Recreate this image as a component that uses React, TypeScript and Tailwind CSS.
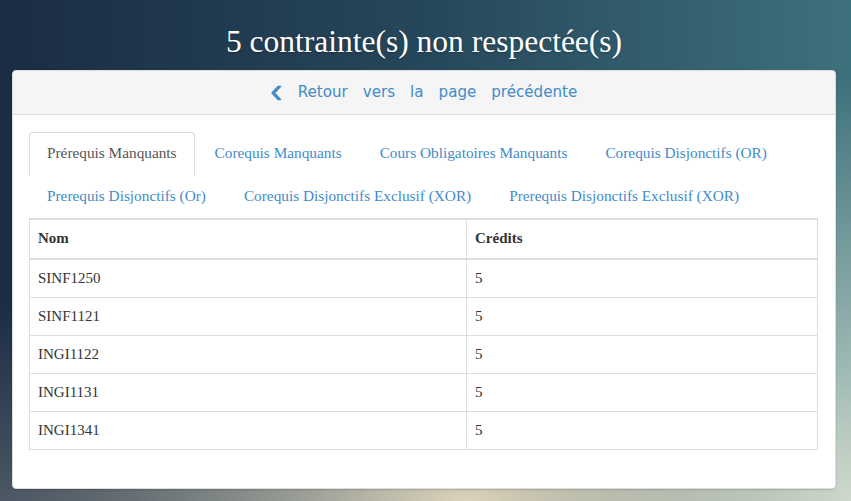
import React, { useState } from 'react';

const tabs = [
  'Prérequis Manquants',
  'Corequis Manquants',
  'Cours Obligatoires Manquants',
  'Corequis Disjonctifs (OR)',
  'Prerequis Disjonctifs (Or)',
  'Corequis Disjonctifs Exclusif (XOR)',
  'Prerequis Disjonctifs Exclusif (XOR)',
];

const rows = [
  { nom: 'SINF1250', credits: 5 },
  { nom: 'SINF1121', credits: 5 },
  { nom: 'INGI1122', credits: 5 },
  { nom: 'INGI1131', credits: 5 },
  { nom: 'INGI1341', credits: 5 },
];

const ChevronLeft: React.FC = () => (
  <svg width="11" height="16" viewBox="0 0 11 16" className="text-[#428bca]">
    <path d="M9.5 1.5 L3.5 8 L9.5 14.5 L7 14.5 L1 8 L7 1.5 Z" fill="currentColor" stroke="currentColor" strokeWidth="1.4" strokeLinejoin="round" />
  </svg>
);

const App: React.FC = () => {
  const [active, setActive] = useState(0);

  return (
    <div className="min-h-[501px] w-full pl-[12px] pr-[15px] pb-[13px] font-['Liberation_Serif',serif] bg-[radial-gradient(ellipse_55%_40%_at_55%_100%,#ddd3bb_0%,rgba(221,211,187,0)_100%),radial-gradient(ellipse_45%_85%_at_100%_100%,#cbdacf_0%,rgba(203,218,207,0)_100%),radial-gradient(ellipse_35%_40%_at_0%_100%,#4b5763_0%,rgba(75,87,99,0)_100%),linear-gradient(to_right,#1b2c43_0%,#26475b_50%,#3d717b_100%)]">
      {/* Title */}
      <h1 className="pt-[24px] pb-[10px] text-center text-[31.5px] leading-[36px] text-white [text-shadow:0_1px_2px_rgba(0,0,0,0.3)]">
        5 contrainte(s) non respectée(s)
      </h1>

      {/* Panel */}
      <div className="bg-white border border-[#ddd] rounded-[4px] shadow-[0_1px_2px_rgba(0,0,0,0.15)] overflow-hidden">
        <div className="h-[44px] bg-[#f5f5f5] border-b border-[#ddd] flex items-center justify-center gap-[15px] font-['DejaVu_Sans',sans-serif] text-[15.1px] text-[#428bca]">
          <span className="w-[12px] flex items-center"><ChevronLeft /></span>
          <span>Retour</span>
          <span>vers</span>
          <span>la</span>
          <span>page</span>
          <span>précédente</span>
        </div>

        <div className="pl-[16px] pr-[17px] pt-[17px] pb-[38px]">
          {/* Tabs */}
          <ul className="flex flex-wrap border-b border-[#ddd] text-[15.3px] leading-[22px]">
            {tabs.map((t, i) => (
              <li key={t} className="-mb-px mr-[2px]">
                <button
                  onClick={() => setActive(i)}
                  className={`px-[17px] pt-[9px] pb-[11px] border rounded-t-[4px] ${
                    i === active
                      ? 'bg-white text-[#555] border-[#ddd] border-b-transparent'
                      : 'text-[#428bca] border-transparent'
                  }`}
                >
                  {t}
                </button>
              </li>
            ))}
          </ul>

          {/* Table */}
          <table className="w-full border-collapse border border-[#ddd] text-[15px] leading-[21px] text-[#333]">
            <thead>
              <tr>
                <th className="w-[437px] text-left font-bold px-[8px] pt-[8px] pb-[9px] border border-[#ddd] border-b-2">Nom</th>
                <th className="text-left font-bold px-[8px] pt-[8px] pb-[9px] border border-[#ddd] border-b-2">Crédits</th>
              </tr>
            </thead>
            <tbody>
              {rows.map(r => (
                <tr key={r.nom}>
                  <td className="px-[8px] py-[8px] border border-[#ddd]">{r.nom}</td>
                  <td className="px-[8px] py-[8px] border border-[#ddd]">{r.credits}</td>
                </tr>
              ))}
            </tbody>
          </table>
        </div>
      </div>
    </div>
  );
};

export default App;
